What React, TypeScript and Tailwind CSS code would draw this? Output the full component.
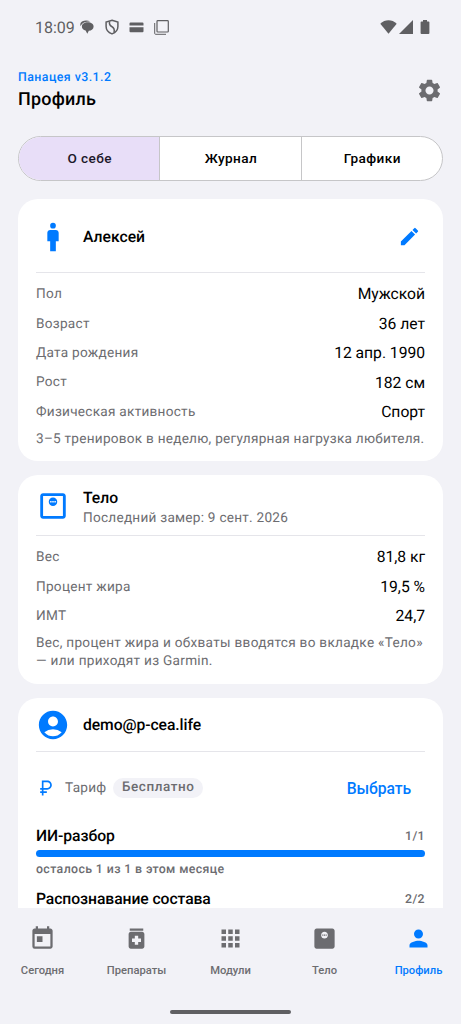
import React from 'react'
import {
  MdAccountCircle,
  MdApps,
  MdCurrencyRuble,
  MdEdit,
  MdMan,
  MdMedication,
  MdMonitorWeight,
  MdOutlineMonitorWeight,
  MdPerson,
  MdSettings,
  MdToday,
} from 'react-icons/md'

type RowProps = { label: string; value: string }

const Row = ({ label, value }: RowProps) => (
  <div className="flex h-[29.4px] items-center justify-between">
    <span className="pt-[0.500px] text-[13.6px] tracking-[0.27px] text-[#6c6c70]">{label}</span>
    <span className="text-[15.7px] tracking-[-0.03px]">{value}</span>
  </div>
)

const StatusBar = () => (
  <div className="flex h-[54px] items-center justify-between pl-[35px] pr-[31px] text-[#5f5f62]">
    <div className="flex items-center">
      <span className="w-[45px] pt-px text-[16px]">18:09</span>
      <svg className="h-[14px] w-[14px]" viewBox="0 0 14 14" fill="currentColor">
        <path d="M.6 6.200C-.1 4.200.4 2.600 2 1.500C4.500.1 8 .1 10.200 1.500C6.500 1.300 3.300 2.200 1.800 4.200C1.200 5 .8 5.600.6 6.200Z" />
        <path d="M7.700 2.200C11.200 2.200 13.600 3.900 13.600 6.500C13.600 9 11.500 10.600 8.800 10.800L7.300 13.700L5.600 10.500C3.300 9.900 1.900 8.600 1.900 6.500C1.900 3.900 4.500 2.200 7.700 2.200Z" />
      </svg>
      <svg className="ml-[11px] h-4 w-[14px]" viewBox="0 0 14 16" fill="none" stroke="currentColor" strokeWidth="1.5">
        <path d="M7 1.200L12.900 3.100V7.500C12.900 11.200 10.500 13.600 7 14.900C3.500 13.600 1.100 11.200 1.100 7.500V3.100Z" />
        <path d="M4.600 2.400C4 5 4.400 6.300 6.700 7.500C9.200 8.800 9.800 10.500 9 13.500" />
      </svg>
      <svg className="ml-[10px] h-[11px] w-[15px]" viewBox="0 0 15 11" fill="currentColor">
        <path d="M1.500.5h12a1 1 0 0 1 1 1V3.500H.5V1.500a1 1 0 0 1 1-1ZM.5 5.300h14v4a1 1 0 0 1-1 1h-12a1 1 0 0 1-1-1Z" />
      </svg>
      <svg className="ml-[10px] h-[15px] w-[15px]" viewBox="0 0 15 15" fill="none" stroke="currentColor">
        <rect x="3" y=".7" width="11.300" height="11.300" rx=".8" strokeWidth="1.200" />
        <path d="M.7 3V13.400a.9.9 0 0 0 .9.9H12" strokeWidth="1" />
      </svg>
    </div>
    <div className="flex items-center">
      <svg className="h-[14px] w-[17px]" viewBox="0 0 17 14" fill="currentColor">
        <path d="M8.500 13.800L.3 3.700C5-.9 12-.9 16.700 3.700Z" />
      </svg>
      <svg className="ml-[2px] h-[14px] w-[14px]" viewBox="0 0 14 14" fill="currentColor">
        <path d="M0 14L14 0V14Z" />
      </svg>
      <svg className="ml-[7px] h-[14px] w-[10px]" viewBox="0 0 10 14" fill="currentColor">
        <path d="M3 0h4v1.400h1.500a.9.9 0 0 1 .9.900V13.100a.9.9 0 0 1-.9.900h-7a.9.9 0 0 1-.9-.9V2.300a.9.9 0 0 1 .9-.9H3Z" />
      </svg>
    </div>
  </div>
)

const tabs = ['О себе', 'Журнал', 'Графики']

const profile: RowProps[] = [
  { label: 'Пол', value: 'Мужской' },
  { label: 'Возраст', value: '36 лет' },
  { label: 'Дата рождения', value: '12 апр. 1990' },
  { label: 'Рост', value: '182 см' },
  { label: 'Физическая активность', value: 'Спорт' },
]

const body: RowProps[] = [
  { label: 'Вес', value: '81,8 кг' },
  { label: 'Процент жира', value: '19,5 %' },
  { label: 'ИМТ', value: '24,7' },
]

const navItems = [
  { label: 'Сегодня', icon: MdToday },
  { label: 'Препараты', icon: MdMedication },
  { label: 'Модули', icon: MdApps },
  { label: 'Тело', icon: MdMonitorWeight },
  { label: 'Профиль', icon: MdPerson, active: true },
]

const App = () => {
  return (
    <div className="flex h-[1024px] w-[461px] flex-col overflow-hidden bg-[#f2f2f7] font-['Roboto',sans-serif] text-black [text-rendering:geometricPrecision]">
      <StatusBar />

      <header className="flex h-[82px] items-start justify-between px-[18px] pt-[14px]">
        <div>
          <div className="pt-px text-[12.34px] font-medium leading-[18px] tracking-[0.46px] text-[#007aff]">Панацея v3.1.2</div>
          <h1 className="text-[17.95px] font-medium leading-[26px] tracking-[0.25px]">Профиль</h1>
        </div>
        <button className="mt-[9px] text-[#6c6c70]">
          <MdSettings size={27} />
        </button>
      </header>

      <div className="mx-[18px] flex h-[45px] shrink-0 overflow-hidden rounded-full border border-[#c6c6c8] bg-white">
        {tabs.map((tab, index) => (
          <button
            key={tab}
            className={`flex-1 border-[#c6c6c8] pb-px pl-px text-[13.6px] font-medium tracking-[0.4px] ${
              index === 0 ? 'bg-[#e8def8] text-[#1d192b]' : 'border-l'
            }`}
          >
            {tab}
          </button>
        ))}
      </div>

      <main className="mt-[17.500px] flex min-h-0 flex-1 flex-col gap-[14px] overflow-hidden px-[18px]">
        <section className="h-[262.500px] shrink-0 rounded-[20px] bg-white px-[18px]">
          <div className="flex h-[74.500px] items-center border-b border-[#e5e5ea] pt-[3px]">
            <MdMan size={34} className="text-[#007aff]" />
            <h2 className="ml-[13px] flex-1 text-[15.7px] font-medium">Алексей</h2>
            <MdEdit size={23} className="mr-[4px] text-[#007aff]" />
          </div>
          <div className="pt-[6.500px]">
            {profile.map((row) => (
              <Row key={row.label} {...row} />
            ))}
          </div>
          <p className="mt-[4px] whitespace-nowrap text-[13.6px] leading-[18px] tracking-[0.25px] text-[#6c6c70]">
            3–5 тренировок в неделю, регулярная нагрузка любителя.
          </p>
        </section>

        <section className="h-[208.500px] shrink-0 rounded-[20px] bg-white px-[18px]">
          <div className="flex h-[61px] items-center border-b border-[#e5e5ea] pt-[2px]">
            <MdOutlineMonitorWeight size={34} className="text-[#007aff]" />
            <div className="ml-[13px] pt-px">
              <h2 className="text-[15.7px] font-medium leading-[21px]">Тело</h2>
              <div className="pt-px text-[13.6px] leading-[18px] tracking-[0.25px] text-[#6c6c70]">Последний замер: 9 сент. 2026</div>
            </div>
          </div>
          <div className="pt-[6.500px]">
            {body.map((row) => (
              <Row key={row.label} {...row} />
            ))}
          </div>
          <p className="mt-[3px] whitespace-nowrap text-[13.6px] leading-[18px] tracking-[0.29px] text-[#6c6c70]">
            Вес, процент жира и обхваты вводятся во вкладке «Тело»
            <br />— или приходят из Garmin.
          </p>
        </section>

        <section className="h-[300px] shrink-0 rounded-[20px] bg-white px-[18px]">
          <div className="flex h-[54px] items-center border-b border-[#e5e5ea] pt-[2px]">
            <MdAccountCircle size={34} className="text-[#007aff]" />
            <h2 className="ml-[13px] text-[15.7px] font-medium tracking-[-0.08px]">demo@p-cea.life</h2>
          </div>
          <div className="flex h-[73px] items-center">
            <MdCurrencyRuble size={20} className="text-[#007aff]" />
            <span className="ml-[9px] pt-px text-[13.6px] tracking-[0.27px] text-[#6c6c70]">Тариф</span>
            <span className="ml-[7px] flex h-5 items-center rounded-full bg-[#f2f2f7] px-[8.500px] pt-px text-[13.46px] font-medium tracking-[0.58px] text-[#6c6c70]">
              Бесплатно
            </span>
            <button className="ml-auto mr-[14px] pt-px text-[15.7px] font-medium tracking-[-0.08px] text-[#007aff]">Выбрать</button>
          </div>
          <div className="flex h-[25px] items-start justify-between leading-[22px]">
            <span className="text-[15.7px] font-medium tracking-[-0.05px]">ИИ-разбор</span>
            <span className="pt-px text-[12.34px] font-medium tracking-[0.4px] text-[#6c6c70]">1/1</span>
          </div>
          <div className="h-[7px] rounded-full bg-[#007aff]" />
          <div className="mt-[4px] text-[12.34px] font-medium leading-[18px] tracking-[0.38px] text-[#6c6c70]">
            осталось 1 из 1 в этом месяце
          </div>
          <div className="mt-[9px] flex h-[25px] items-start justify-between leading-[22px]">
            <span className="text-[15.7px] font-medium tracking-[-0.07px]">Распознавание состава</span>
            <span className="pt-px text-[12.34px] font-medium tracking-[0.4px] text-[#6c6c70]">2/2</span>
          </div>
          <div className="h-[7px] rounded-full bg-[#007aff]" />
        </section>
      </main>

      <nav className="flex h-[116.500px] shrink-0 flex-col bg-[#f2f2f7]">
        <div className="flex justify-between pt-[17px]">
          {navItems.map(({ label, icon: Icon, active }) => (
            <button
              key={label}
              className={`flex w-[85px] flex-col items-center ${active ? 'text-[#007aff]' : 'text-[#6c6c70]'}`}
            >
              <Icon size={27} />
              <span className="mt-[10.500px] text-[11.2px] font-medium leading-[18px]">{label}</span>
            </button>
          ))}
        </div>
        <div className="mx-auto mt-[29.500px] h-1 w-[121px] rounded-full bg-[#5f5f62]" />
      </nav>
    </div>
  )
}

export default App
